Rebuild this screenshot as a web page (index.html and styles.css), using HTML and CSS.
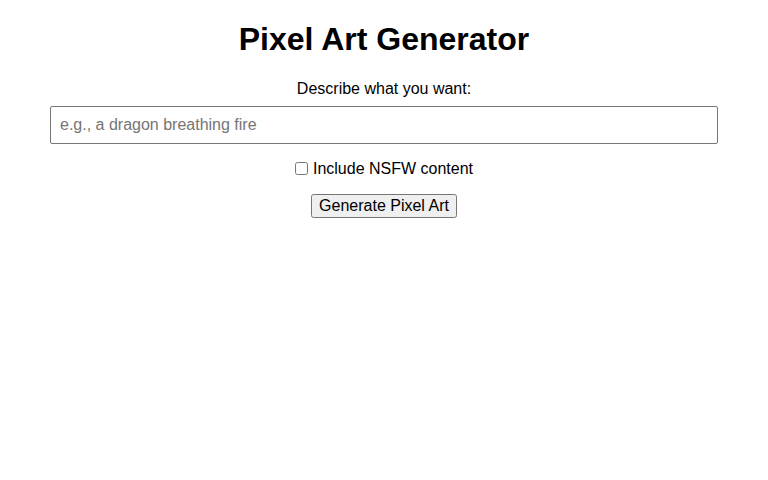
FILE: index.html
```html
<!DOCTYPE html>
<html>
<head>
<meta charset="utf-8">
<link rel="stylesheet" href="styles.css">
</head>
<body>
<div class="app">
  <h1 class="title">Pixel Art Generator</h1>
  <label class="prompt-label" for="prompt">Describe what you want:</label>
  <input class="prompt-input" id="prompt" type="text" placeholder="e.g., a dragon breathing fire">
  <label class="nsfw"><input type="checkbox" class="nsfw-box">Include NSFW content</label>
  <button class="gen-btn" type="button">Generate Pixel Art</button>
</div>
</body>
</html>
```
FILE: styles.css
```css
html, body {
  margin: 0;
  padding: 0;
  background: #fff;
}
body {
  font-family: "Liberation Sans", Arial, sans-serif;
  font-size: 16px;
  color: #000;
}
.app {
  display: flex;
  flex-direction: column;
  align-items: center;
  padding: 21px 50px 20px;
}
.title {
  font-size: 32px;
  font-weight: bold;
  margin: 0 0 22px 0;
  line-height: 37px;
}
.prompt-label {
  display: block;
  line-height: 18px;
  margin-bottom: 8px;
}
.prompt-input {
  box-sizing: border-box;
  width: 100%;
  height: 38px;
  padding: 0 9px;
  border: 1px solid #767676;
  border-radius: 2px;
  font-family: "Liberation Sans", Arial, sans-serif;
  font-size: 16px;
  margin: 0;
}
.prompt-input::placeholder {
  color: #757575;
}
.nsfw {
  display: flex;
  align-items: center;
  margin-top: 16px;
  line-height: 18px;
}
.nsfw-box {
  width: 13px;
  height: 13px;
  margin: 0 5px 2px 0;
}
.gen-btn {
  margin-top: 16px;
  font-family: "Liberation Sans", Arial, sans-serif;
  font-size: 16px;
  padding: 1px 6px;
  line-height: 18px;
}
```
